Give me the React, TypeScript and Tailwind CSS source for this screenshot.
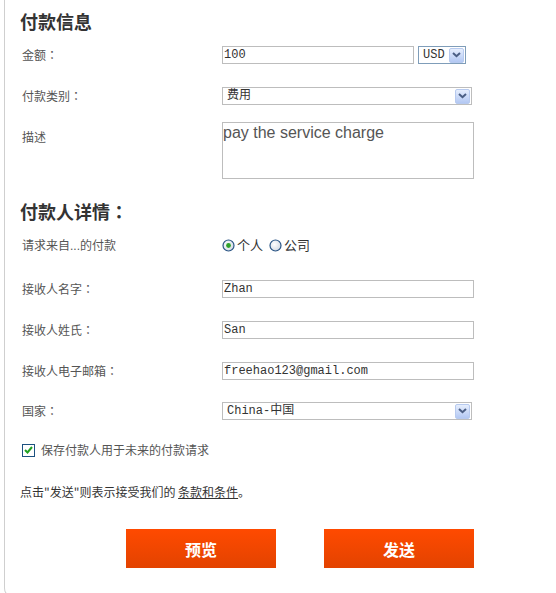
import React from "react";

const font = { fontFamily: '"Liberation Sans", "Noto Sans CJK SC", sans-serif' };
const cjk = { fontFamily: '"Noto Sans CJK SC", "Liberation Sans", sans-serif' };
const jp = { fontFamily: '"Noto Sans CJK JP", "Noto Sans CJK SC", sans-serif' };
const mono = { fontFamily: '"Liberation Mono", "Noto Sans CJK SC", monospace' };

const labelCls = "w-[202px] shrink-0 pl-[2px] text-[12px] leading-[18px] text-[#555]";
const inputCls =
  "h-[18px] border border-[#bdbdbd] bg-white px-[1px] text-[12px] leading-[16px] text-[#333] outline-none";

const Colon = () => <span style={jp}>：</span>;

const Arrow = () => (
  <span className="flex h-[15px] w-[15px] items-center justify-center rounded-[2px] border border-[#b7caef] bg-linear-to-b from-[#e6eefd] to-[#b3c8f3]">
    <svg width="9" height="6" viewBox="0 0 9 6">
      <path d="M1 1l3.5 3.2L8 1" stroke="#4b5e84" strokeWidth="2" fill="none" />
    </svg>
  </span>
);

const FakeSelect = ({ text, width, border = "border-[#bdbdbd]" }: { text: string; width: string; border?: string }) => (
  <div
    className={`flex h-[18px] items-center justify-between border bg-white pr-[1px] pl-[4px] text-[12px] text-[#333] ${width} ${border}`}
    style={mono}
  >
    <span className="leading-[16px]">{text}</span>
    <Arrow />
  </div>
);

const Radio = ({ checked }: { checked?: boolean }) => (
  <svg width="13" height="13" viewBox="0 0 13 13">
    <defs>
      <radialGradient id={checked ? "rg1" : "rg2"} cx="0.4" cy="0.4" r="0.6">
        <stop offset="0" stopColor="#ffffff" />
        <stop offset="1" stopColor="#d4dbe4" />
      </radialGradient>
    </defs>
    <circle cx="6.5" cy="6.5" r="5.5" fill={`url(#${checked ? "rg1" : "rg2"})`} stroke="#2a5585" strokeWidth="1.2" />
    {checked && <circle cx="6.5" cy="6.5" r="2.4" fill="#2fa12a" />}
  </svg>
);

const Row = ({
  label,
  children,
  className = "",
  labelSize = "h-[18px]",
}: {
  label: React.ReactNode;
  children: React.ReactNode;
  className?: string;
  labelSize?: string;
}) => (
  <div className={`flex items-start ${className}`}>
    <div className={`${labelCls} ${labelSize} overflow-visible`} style={cjk}>
      {label}
    </div>
    {children}
  </div>
);

export default function App() {
  return (
    <div className="h-[593px] overflow-hidden bg-white" style={font}>
      <div className="ml-[4px] h-[598px] rounded-bl-[10px] border-b border-l border-[#cfcfcf] pl-[15px]">
        <h2 className="h-[33px] pt-[9px] text-[18px] leading-[24px] font-bold text-[#333]" style={cjk}>
          付款信息
        </h2>

        <Row label={<>金额<Colon /></>} className="mt-[13px]">
          <input readOnly value="100" className={`${inputCls} w-[192px]`} style={mono} />
          <div className="ml-[4px]">
            <FakeSelect text="USD" width="w-[48px]" border="border-[#7f9db9]" />
          </div>
        </Row>

        <Row label={<>付款类别<Colon /></>} className="mt-[23px]">
          <FakeSelect text="费用" width="w-[250px]" />
        </Row>

        <Row label="描述" className="mt-[17px]" labelSize="h-[24px] pt-[6px]">
          <textarea
            readOnly
            value="pay the service charge"
            className="h-[57px] w-[252px] resize-none border border-[#bdbdbd] bg-white px-0 text-[16px] leading-[20px] text-[#555] outline-none"
            style={font}
          />
        </Row>

        <h2 className="mt-[20px] h-[24px] text-[18px] leading-[24px] font-bold text-[#333]" style={cjk}>
          付款人详情<Colon />
        </h2>

        <Row
          label={
            <>
              请求来自<span style={font}>...</span>的付款
            </>
          }
          className="mt-[13px]"
        >
          <div className="flex h-[18px] items-center text-[13px] text-[#333]" style={cjk}>
            <Radio checked />
            <span className="ml-[2px]">个人</span>
            <span className="ml-[6px] flex items-center">
              <Radio />
            </span>
            <span className="ml-[2px]">公司</span>
          </div>
        </Row>

        <Row label={<>接收人名字<Colon /></>} className="mt-[26px]">
          <input readOnly value="Zhan" className={`${inputCls} w-[252px]`} style={mono} />
        </Row>

        <Row label={<>接收人姓氏<Colon /></>} className="mt-[23px]">
          <input readOnly value="San" className={`${inputCls} w-[252px]`} style={mono} />
        </Row>

        <Row label={<>接收人电子邮箱<Colon /></>} className="mt-[23px]">
          <input readOnly value="freehao123@gmail.com" className={`${inputCls} w-[252px]`} style={mono} />
        </Row>

        <Row label={<>国家<Colon /></>} className="mt-[22px]">
          <FakeSelect text="China-中国" width="w-[250px]" />
        </Row>

        <div className="mt-[21px] flex h-[18px] items-center pl-[2px]">
          <span className="flex h-[13px] w-[13px] items-center justify-center border border-[#1c5180] bg-white">
            <svg width="9" height="8" viewBox="0 0 9 8">
              <path d="M1 4l2.5 2.5L8 1" stroke="#21a121" strokeWidth="2" fill="none" />
            </svg>
          </span>
          <span className="ml-[6px] text-[12px] text-[#555]" style={cjk}>
            保存付款人用于未来的付款请求
          </span>
        </div>

        <p className="mt-[24px] h-[18px] text-[12px] leading-[18px] text-[#333]" style={cjk}>
          点击"发送"则表示接受我们的 <span className="underline">条款和条件</span>。
        </p>

        <div className="mt-[28px] ml-[106px] flex gap-[48px]">
          <button
            type="button"
            className="h-[39px] w-[150px] bg-linear-to-b from-[#ff4a00] to-[#e34300] text-[16px] font-bold text-white"
            style={cjk}
          >
            预览
          </button>
          <button
            type="button"
            className="h-[39px] w-[150px] bg-linear-to-b from-[#ff4a00] to-[#e34300] text-[16px] font-bold text-white"
            style={cjk}
          >
            发送
          </button>
        </div>
      </div>
    </div>
  );
}
